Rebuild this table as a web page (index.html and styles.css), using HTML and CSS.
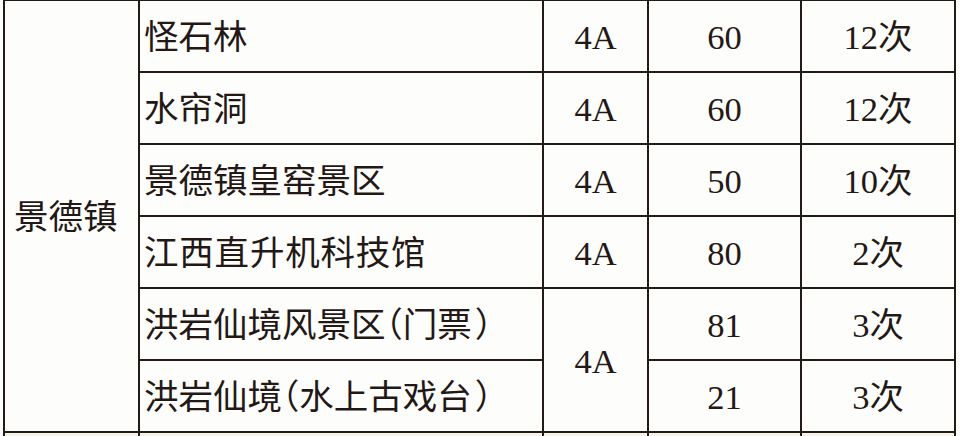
FILE: index.html
```html
<!DOCTYPE html>
<html lang="zh-CN">
<head>
<meta charset="utf-8">
<title>景德镇景区</title>
<link rel="stylesheet" href="styles.css">
</head>
<body>
<div class="sheet">
  <div class="cell city">景德镇</div>

  <div class="cell name">怪石林</div>
  <div class="cell mid">4A</div>
  <div class="cell mid">60</div>
  <div class="cell mid">12次</div>

  <div class="cell name">水帘洞</div>
  <div class="cell mid">4A</div>
  <div class="cell mid">60</div>
  <div class="cell mid">12次</div>

  <div class="cell name">景德镇皇窑景区</div>
  <div class="cell mid">4A</div>
  <div class="cell mid">50</div>
  <div class="cell mid">10次</div>

  <div class="cell name wide">江西直升机科技馆</div>
  <div class="cell mid">4A</div>
  <div class="cell mid">80</div>
  <div class="cell mid">2次</div>

  <div class="cell name">洪岩仙境风景区<span class="paren">（</span>门票<span class="paren close">）</span></div>
  <div class="cell mid grade-span">4A</div>
  <div class="cell mid">81</div>
  <div class="cell mid">3次</div>

  <div class="cell name">洪岩仙境<span class="paren">（</span>水上古戏台<span class="paren close">）</span></div>
  <div class="cell mid">21</div>
  <div class="cell mid">3次</div>

  <div class="cell next"></div>
  <div class="cell next"></div>
  <div class="cell next"></div>
  <div class="cell next"></div>
  <div class="cell next"></div>
</div>
</body>
</html>
```
FILE: styles.css
```css
html, body {
  margin: 0;
  padding: 0;
  background: #fdfdfb;
  overflow: hidden;
}

.sheet {
  display: grid;
  grid-template-columns: 133px 402px 103px 151px 152px;
  grid-auto-rows: 70px;
  gap: 2px;
  padding: 2px;
  margin: -1px 0 0 3px;
  width: max-content;
  background: #221b18;
  font-family: "Liberation Serif", "Noto Sans CJK SC", serif;
  font-size: 34.5px;
  color: #231815;
}

.cell {
  background: #fdfdfb;
  display: flex;
  align-items: center;
  line-height: 1;
  padding-top: 3px;
  box-sizing: border-box;
  white-space: nowrap;
}

.city {
  grid-row: 1 / span 6;
  padding-left: 9px;
}

.name {
  padding-left: 4px;
}

.wide {
  letter-spacing: 0.8px;
}

.paren {
  font-feature-settings: "halt" 1;
}

.close {
  padding-left: 3px;
}

.mid {
  justify-content: center;
}

.grade-span {
  grid-row: span 2;
}

.next {
  background: #f6f3ea;
}
```
